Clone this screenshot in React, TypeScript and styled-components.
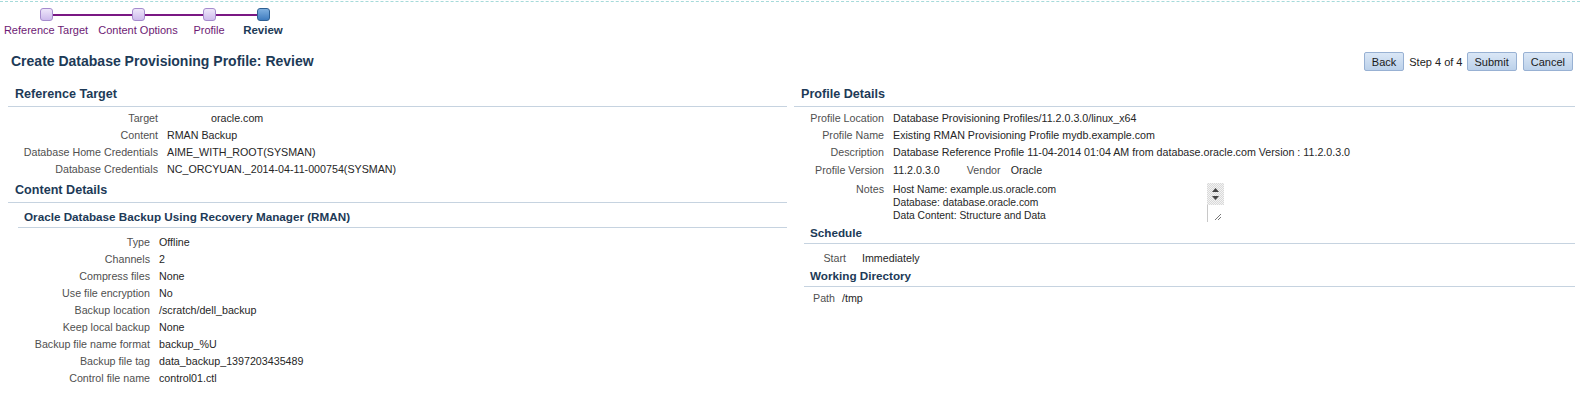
import React from "react";
import styled, { createGlobalStyle } from "styled-components";

const GlobalStyle = createGlobalStyle`
  body {
    margin: 0;
    background: #fff;
    font-family: "Liberation Sans", Arial, sans-serif;
  }
`;

const steps = [
  { label: "Reference Target", width: 92 },
  { label: "Content Options", width: 92 },
  { label: "Profile", width: 50 },
  { label: "Review", width: 58 },
];

const referenceRows: [string, string, number?][] = [
  ["Target", "oracle.com", 44],
  ["Content", "RMAN Backup"],
  ["Database Home Credentials", "AIME_WITH_ROOT(SYSMAN)"],
  ["Database Credentials", "NC_ORCYUAN._2014-04-11-000754(SYSMAN)"],
];

const backupRows: [string, string][] = [
  ["Type", "Offline"],
  ["Channels", "2"],
  ["Compress files", "None"],
  ["Use file encryption", "No"],
  ["Backup location", "/scratch/dell_backup"],
  ["Keep local backup", "None"],
  ["Backup file name format", "backup_%U"],
  ["Backup file tag", "data_backup_1397203435489"],
  ["Control file name", "control01.ctl"],
];

const profileRows: [string, string][] = [
  ["Profile Location", "Database Provisioning Profiles/11.2.0.3.0/linux_x64"],
  ["Profile Name", "Existing RMAN Provisioning Profile mydb.example.com"],
  [
    "Description",
    "Database Reference Profile 11-04-2014 01:04 AM from database.oracle.com Version : 11.2.0.3.0",
  ],
];

const App = () => {
  return (
    <>
      <GlobalStyle />
      <Train>
        {steps.map((step, i) => {
          const current = i === steps.length - 1;
          return (
            <Step key={step.label}>
              <MarkerRow>
                <Track $on={i > 0} />
                <Marker $current={current} />
                <Track $on={i < steps.length - 1} />
              </MarkerRow>
              <StepLabel $current={current}>{step.label}</StepLabel>
            </Step>
          );
        })}
      </Train>

      <TitleBar>
        <Title>Create Database Provisioning Profile: Review</Title>
        <Actions>
          <Button>Back</Button>
          <StepInfo>Step 4 of 4</StepInfo>
          <Button>Submit</Button>
          <Button>Cancel</Button>
        </Actions>
      </TitleBar>

      <Columns>
        <Panel>
          <SectionHeader>Reference Target</SectionHeader>
          <DetailTable $pt={3} $labelWidth={150} $gap={9}>
            {referenceRows.map(([label, value, indent]) => (
              <React.Fragment key={label}>
                <Label>{label}</Label>
                <Value $indent={indent}>{value}</Value>
              </React.Fragment>
            ))}
          </DetailTable>

          <SectionHeader $mt={4}>Content Details</SectionHeader>
          <SubHeader $mt={7}>Oracle Database Backup Using Recovery Manager (RMAN)</SubHeader>
          <DetailTable $pt={6} $labelWidth={142} $gap={9}>
            {backupRows.map(([label, value]) => (
              <React.Fragment key={label}>
                <Label>{label}</Label>
                <Value>{value}</Value>
              </React.Fragment>
            ))}
          </DetailTable>
        </Panel>

        <Panel>
          <SectionHeader>Profile Details</SectionHeader>
          <DetailTable $pt={3} $labelWidth={90} $gap={9}>
            {profileRows.map(([label, value]) => (
              <React.Fragment key={label}>
                <Label>{label}</Label>
                <Value>{value}</Value>
              </React.Fragment>
            ))}
            <Label $lh={19}>Profile Version</Label>
            <VersionValue>
              <span>11.2.0.3.0</span>
              <InlineLabel>Vendor</InlineLabel>
              <span>Oracle</span>
            </VersionValue>
            <NotesLabel>Notes</NotesLabel>
            <NotesBox>
              <NotesText>
                Host Name: example.us.oracle.com
                <br />
                Database: database.oracle.com
                <br />
                Data Content: Structure and Data
              </NotesText>
              <ScrollBar>
                <ScrollButtons>
                  <svg width="7" height="4" viewBox="0 0 7 4">
                    <path d="M3.5 0 L7 4 L0 4 Z" fill="#444" />
                  </svg>
                  <svg width="7" height="4" viewBox="0 0 7 4">
                    <path d="M0 0 L7 0 L3.5 4 Z" fill="#444" />
                  </svg>
                </ScrollButtons>
                <ResizeArea>
                  <svg width="8" height="8" viewBox="0 0 8 8">
                    <path d="M1 7 L7 1 M4 7 L7 4" stroke="#777" strokeWidth="1" />
                  </svg>
                </ResizeArea>
              </ScrollBar>
            </NotesBox>
          </DetailTable>

          <SubHeader $mt={4}>Schedule</SubHeader>
          <DetailTable $pt={6} $labelWidth={52} $gap={16}>
            <Label>Start</Label>
            <Value>Immediately</Value>
          </DetailTable>

          <SubHeader $mt={2}>Working Directory</SubHeader>
          <DetailTable $pt={3} $labelWidth={41} $gap={7}>
            <Label>Path</Label>
            <Value>/tmp</Value>
          </DetailTable>
        </Panel>
      </Columns>
    </>
  );
};

export default App;

const Train = styled.div`
  display: grid;
  grid-template-columns: ${steps.map((s) => `${s.width}px`).join(" ")};
  margin-top: 1px;
  padding-top: 6px;
  border-top: 1px dashed #a6dada;
`;

const Step = styled.div`
  display: flex;
  flex-direction: column;
  align-items: center;
`;

const MarkerRow = styled.div`
  display: flex;
  align-items: center;
  width: 100%;
  height: 13px;
`;

const Track = styled.div<{ $on: boolean }>`
  flex: 1;
  height: 2px;
  background: ${({ $on }) => ($on ? "#7a1883" : "transparent")};
`;

const Marker = styled.div<{ $current: boolean }>`
  width: 13px;
  height: 13px;
  box-sizing: border-box;
  border-radius: 3px;
  border: 1px solid ${({ $current }) => ($current ? "#2e5f92" : "#a68bcd")};
  background: ${({ $current }) =>
    $current
      ? "linear-gradient(#7fb0e0, #3f7cbf)"
      : "linear-gradient(#eee6fa, #cdbbec)"};
`;

const StepLabel = styled.span<{ $current: boolean }>`
  margin-top: 2px;
  font-size: ${({ $current }) => ($current ? "11.5px" : "11px")};
  line-height: 14px;
  font-weight: ${({ $current }) => ($current ? "bold" : "normal")};
  color: ${({ $current }) => ($current ? "#1d3a57" : "#6d1a74")};
  white-space: nowrap;
`;

const TitleBar = styled.div`
  display: flex;
  align-items: center;
  justify-content: space-between;
  height: 19px;
  margin-top: 15px;
  padding: 0 7px 0 11px;
`;

const Title = styled.h1`
  margin: 0;
  font-size: 14px;
  line-height: 19px;
  font-weight: bold;
  color: #1d3a57;
`;

const Actions = styled.div`
  display: flex;
  align-items: center;
`;

const Button = styled.button`
  height: 19px;
  padding: 0 7px;
  font-family: "Liberation Sans", Arial, sans-serif;
  font-size: 11px;
  color: #1a1a1a;
  border: 1px solid #98b1d3;
  border-radius: 2px;
  background: linear-gradient(#dae7f6, #bcd1ea);

  & + & {
    margin-left: 6px;
  }
`;

const StepInfo = styled.span`
  margin: 0 4px 0 5px;
  font-size: 11px;
  color: #222;
`;

const Columns = styled.div`
  display: grid;
  grid-template-columns: 779px 781px;
  column-gap: 7px;
  margin-top: 15px;
  padding-left: 8px;
`;

const Panel = styled.section`
  display: flex;
  flex-direction: column;
`;

const SectionHeader = styled.h2<{ $mt?: number }>`
  margin: ${({ $mt }) => $mt || 0}px 0 0;
  padding: 0 0 4px 7px;
  font-size: 12.6px;
  line-height: 16px;
  font-weight: bold;
  color: #1d3a57;
  border-bottom: 1px solid #c6d3e0;
`;

const SubHeader = styled.h3<{ $mt: number }>`
  margin: ${({ $mt }) => $mt}px 0 0 10px;
  padding: 0 0 3px 6px;
  font-size: 11.7px;
  line-height: 14px;
  font-weight: bold;
  color: #1d3a57;
  border-bottom: 1px solid #c6d3e0;
`;

const DetailTable = styled.div<{ $pt: number; $labelWidth: number; $gap: number }>`
  display: grid;
  grid-template-columns: ${({ $labelWidth }) => $labelWidth}px 1fr;
  column-gap: ${({ $gap }) => $gap}px;
  padding-top: ${({ $pt }) => $pt}px;
  font-size: 10.7px;
  line-height: 17px;
`;

const Label = styled.div<{ $lh?: number }>`
  text-align: right;
  color: #505050;
  white-space: nowrap;
  ${({ $lh }) => ($lh ? `line-height: ${$lh}px;` : "")}
`;

const Value = styled.div<{ $indent?: number }>`
  padding-left: ${({ $indent }) => $indent || 0}px;
  color: #262626;
  white-space: nowrap;
`;

const VersionValue = styled(Value)`
  display: flex;
  line-height: 19px;
`;

const InlineLabel = styled.span`
  margin: 0 10px 0 27px;
  color: #505050;
`;

const NotesLabel = styled(Label)`
  padding-top: 3px;
  line-height: 13px;
`;

const NotesBox = styled.div`
  display: flex;
  width: 331px;
  height: 39px;
  margin-top: 3px;
`;

const NotesText = styled.div`
  flex: 1;
  font-size: 10.3px;
  line-height: 13px;
  color: #262626;
  white-space: nowrap;
`;

const ScrollBar = styled.div`
  display: flex;
  flex-direction: column;
  width: 17px;
`;

const ScrollButtons = styled.div`
  display: flex;
  flex-direction: column;
  align-items: center;
  justify-content: space-around;
  height: 22px;
  padding: 3px 0;
  box-sizing: border-box;
  background: repeating-conic-gradient(#d9d9d9 0 25%, #f3f3f3 0 50%) 0 0 / 2px 2px;
`;

const ResizeArea = styled.div`
  flex: 1;
  display: flex;
  align-items: flex-end;
  justify-content: flex-end;
  padding: 0 2px 1px 0;
  border-left: 1px solid #c8c8c8;
`;
